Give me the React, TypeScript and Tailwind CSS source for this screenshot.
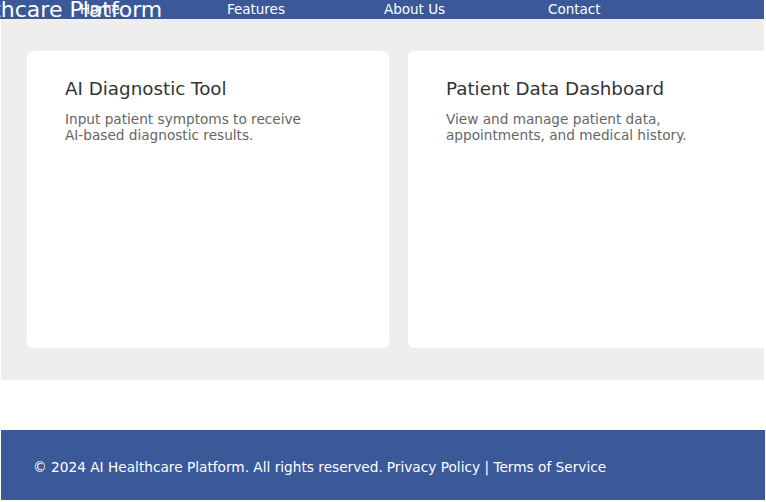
export default function App() {
  const tools = [
    {
      title: "AI Diagnostic Tool",
      description: "Input patient symptoms to receive AI-based diagnostic results.",
    },
    {
      title: "Patient Data Dashboard",
      description: "View and manage patient data, appointments, and medical history.",
    },
  ];

  return (
    <div className="w-[766px] h-[502px] overflow-hidden bg-white font-['DejaVu_Sans',sans-serif]">
      <header className="relative h-[19px] w-[764px] bg-[#3b5998] text-white">
        <h1 className="absolute left-[-86px] top-1/2 -translate-y-1/2 whitespace-nowrap text-[22px] leading-none font-normal">
          AI Healthcare Platform
        </h1>
        <nav className="relative flex h-full items-center text-[13.5px]">
          <a className="ml-[80px]">Home</a>
          <a className="ml-[107px]">Features</a>
          <a className="ml-[99px]">About Us</a>
          <a className="ml-[103px]">Contact</a>
        </nav>
      </header>

      <main className="ml-px w-[763px] overflow-hidden bg-[#eeeeee] pl-[26px] py-[32px]">
        <div className="flex gap-[19px]">
          {tools.map((tool, index) => (
            <div
              key={index}
              className="h-[297px] w-[362px] shrink-0 rounded-md bg-white px-[38px] pt-[24px]"
            >
              <h2 className="text-[18.3px] text-[#333333]">{tool.title}</h2>
              <p className="mt-[9px] w-[245px] text-[13.65px] leading-[16px] text-[#666666]">
                {tool.description}
              </p>
            </div>
          ))}
        </div>
      </main>

      <footer className="ml-px mt-[50px] flex h-[70px] w-[764px] items-center bg-[#3b5998] px-[32px] pt-[4px] text-[13.7px] text-white">
        <p>© 2024 AI Healthcare Platform. All rights reserved.</p>
        <p className="ml-[4px]">Privacy Policy | Terms of Service</p>
      </footer>
    </div>
  );
}
